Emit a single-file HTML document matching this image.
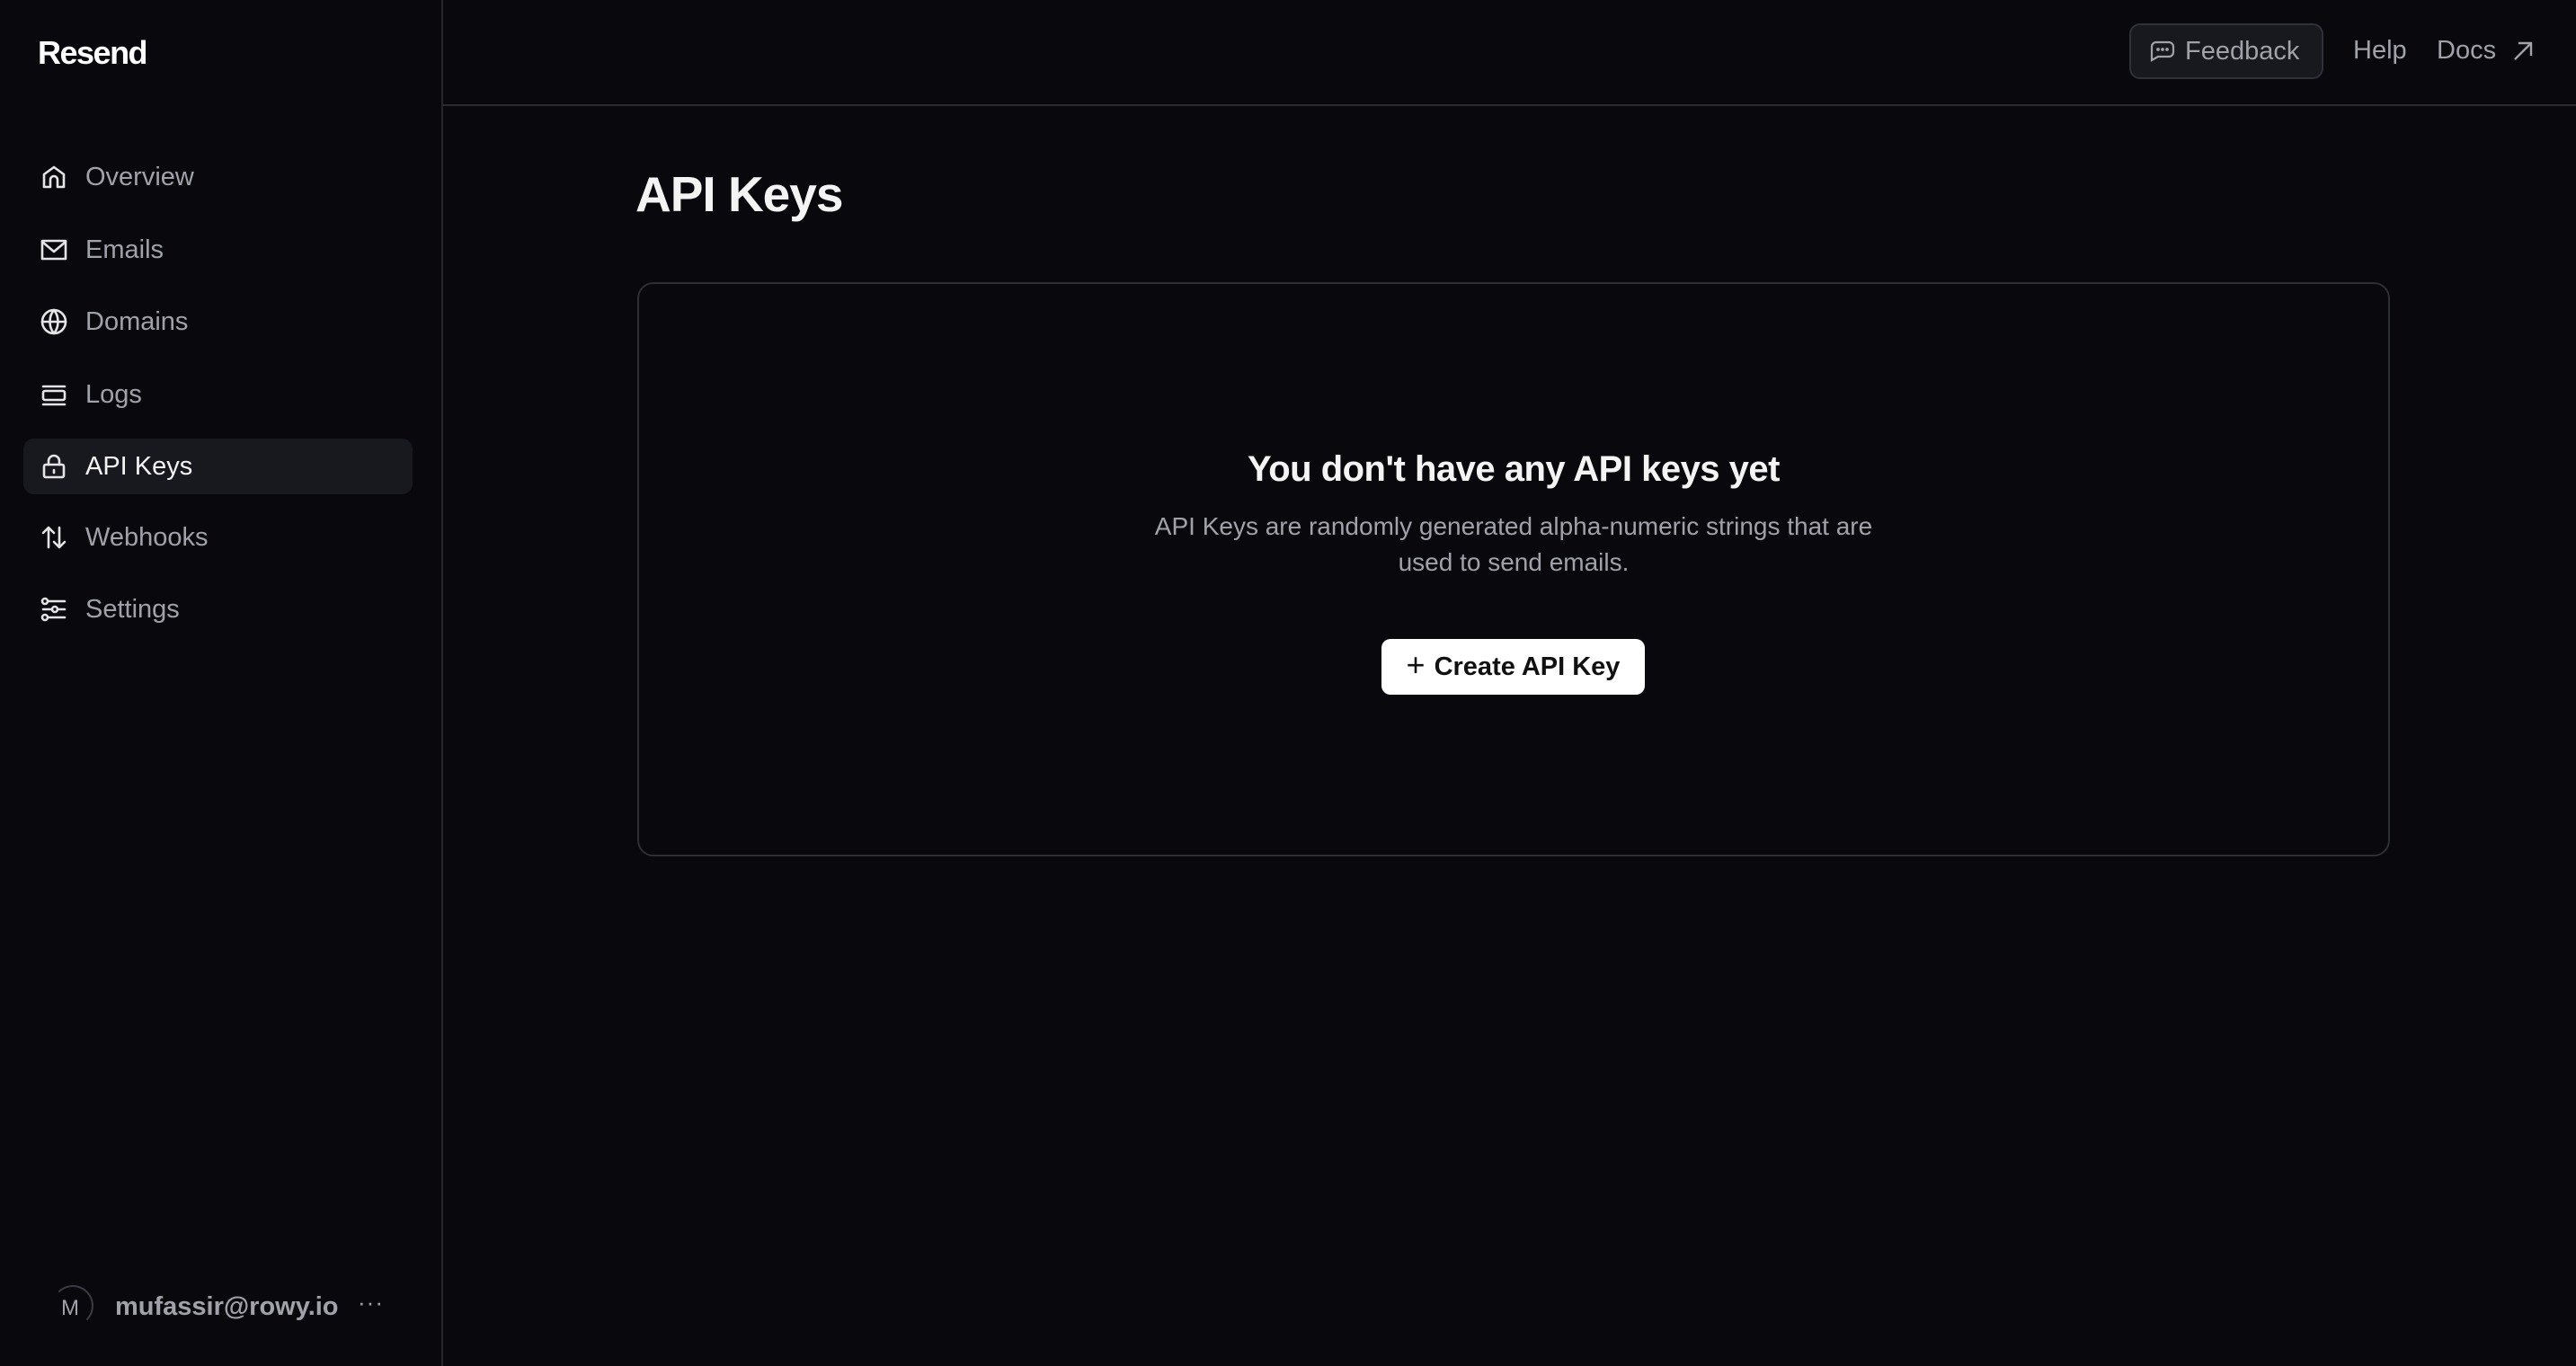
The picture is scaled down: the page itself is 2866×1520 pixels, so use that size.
<!DOCTYPE html>
<html><head><meta charset="utf-8"><style>
*{margin:0;padding:0;box-sizing:border-box}
body{width:2866px;height:1520px;background:#09090d;font-family:"Liberation Sans",sans-serif;color:#a1a1aa;position:relative;overflow:hidden}
.abs{position:absolute}
.side{left:0;top:0;width:493px;height:1520px;border-right:2px solid #26262c}
.logo{left:42px;top:38px;font-size:36px;font-weight:bold;color:#fff;letter-spacing:-1.5px}
.nav{left:26px;width:433px;height:62px;border-radius:12px;display:flex;align-items:center;font-size:29px;color:#a1a1aa}
.nav svg{margin-left:18px;margin-right:19px;width:32px;height:32px;fill:none;stroke:#e4e4e7;stroke-width:2.6;stroke-linecap:round;stroke-linejoin:round}
.nav.act{background:#18181f;color:#f4f4f5}
.hline{left:493px;top:116px;width:2373px;height:2px;background:#2a2a30}
.fb{left:2369px;top:26px;width:216px;height:62px;border:2px solid #303038;background:#18181f;border-radius:12px;font-size:29px;display:flex;align-items:center;color:#a1a1aa}
.top{font-size:29px;color:#a1a1aa;top:40px}
h1{position:absolute;left:707px;top:184px;font-size:55px;color:#f4f4f5;letter-spacing:-1px}
.card{left:709px;top:314px;width:1950px;height:639px;border:2px solid #2e2e35;border-radius:18px}
.h2{left:709px;width:1950px;top:500px;text-align:center;font-size:40px;font-weight:bold;color:#f4f4f5;letter-spacing:-0.5px}
.p{left:1259px;width:850px;top:566px;text-align:center;font-size:28px;line-height:40px;color:#a1a1aa}
.btn{left:1537px;top:711px;width:293px;height:62px;background:#fff;border-radius:10px;color:#111;font-size:29px;font-weight:bold;display:flex;align-items:center;justify-content:center}
</style></head><body>
<div class="abs side"></div>
<div class="abs logo">Resend</div>

<div class="abs nav" style="top:166px"><svg viewBox="0 0 32 32"><path d="M5 27V13L16 5l11 8v14h-7v-8a4 4 0 0 0-8 0v8z"/></svg>Overview</div>
<div class="abs nav" style="top:247px"><svg viewBox="0 0 32 32"><rect x="3" y="6" width="26" height="20"/><path d="M3 7l13 11 13-11"/></svg>Emails</div>
<div class="abs nav" style="top:327px"><svg viewBox="0 0 32 32"><circle cx="16" cy="16" r="13"/><path d="M3 16h26M16 3c-6 7-6 19 0 26M16 3c6 7 6 19 0 26"/></svg>Domains</div>
<div class="abs nav" style="top:408px"><svg viewBox="0 0 32 32"><path d="M4 7h24M4 27h24"/><rect x="4" y="12" width="24" height="10" rx="2"/></svg>Logs</div>
<div class="abs nav act" style="top:488px"><svg viewBox="0 0 32 32"><rect x="5" y="14" width="22" height="14" rx="2"/><path d="M10 14V10a6 6 0 0 1 12 0v4M16 20v3"/></svg>API Keys</div>
<div class="abs nav" style="top:567px"><svg viewBox="0 0 32 32"><path d="M10 27V5M4 11l6-6 6 6M22 5v22M16 21l6 6 6-6"/></svg>Webhooks</div>
<div class="abs nav" style="top:647px"><svg viewBox="0 0 32 32"><path d="M10 7h18M4 16h10M20 16h8M10 25h18"/><circle cx="6" cy="7" r="3"/><circle cx="17" cy="16" r="3"/><circle cx="6" cy="25" r="3"/></svg>Settings</div>

<div class="abs" style="left:58px;top:1430px;width:46px;height:46px;border-radius:50%;border:2px solid #3a3a42;border-left-color:transparent;border-bottom-color:transparent"></div>
<div class="abs" style="left:68px;top:1442px;font-size:24px;color:#a1a1aa">M</div>
<div class="abs" style="left:128px;top:1438px;font-size:29px;font-weight:bold;color:#a1a1aa">mufassir@rowy.io</div>
<div class="abs" style="left:398px;top:1434px;font-size:26px;color:#a1a1aa;letter-spacing:1px">···</div>

<div class="abs hline"></div>
<div class="abs fb"><svg style="margin-left:20px;margin-right:10px" width="30" height="26" viewBox="0 0 30 26" fill="none" stroke="#a1a1aa" stroke-width="2.2"><path d="M3 23V8a5 5 0 0 1 5-5h14a5 5 0 0 1 5 5v6a5 5 0 0 1-5 5H10l-7 4z"/><circle cx="10" cy="11" r=".8" fill="#a1a1aa"/><circle cx="15" cy="11" r=".8" fill="#a1a1aa"/><circle cx="20" cy="11" r=".8" fill="#a1a1aa"/></svg>Feedback</div>
<div class="abs top" style="left:2618px">Help</div>
<div class="abs top" style="left:2711px">Docs</div>
<svg class="abs" style="left:2795px;top:45px" width="24" height="24" viewBox="0 0 24 24" fill="none" stroke="#a1a1aa" stroke-width="2.4"><path d="M3 21L21 3M7 3h14v14"/></svg>

<h1>API Keys</h1>
<div class="abs card"></div>
<div class="abs h2">You don't have any API keys yet</div>
<div class="abs p">API Keys are randomly generated alpha-numeric strings that are used to send emails.</div>
<div class="abs btn"><span style="font-weight:normal;font-size:36px;margin-right:10px;margin-top:-4px">+</span>Create API Key</div>
</body></html>
